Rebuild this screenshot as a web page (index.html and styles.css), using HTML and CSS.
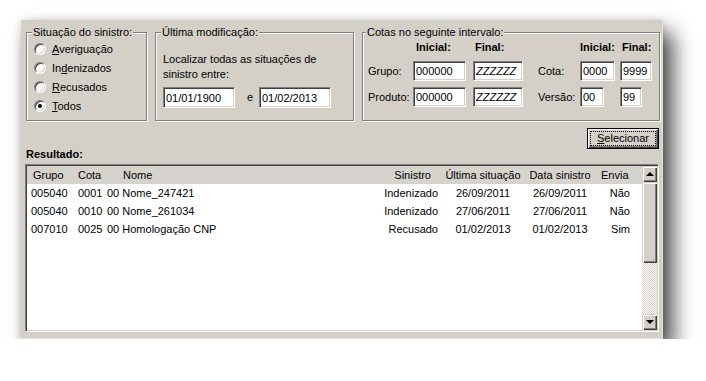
FILE: index.html
```html
<!DOCTYPE html>
<html lang="pt-BR">
<head>
  <meta charset="UTF-8">
  <title>Consulta de sinistros</title>
  <link rel="stylesheet" href="styles.css">
</head>
<body>
  <div class="janela">
    <div class="filtros">
      <fieldset class="grupo situacao">
        <legend>Situação do sinistro:</legend>
        <label class="opcao"><span class="bolinha"></span><span><u>A</u>veriguação</span></label>
        <label class="opcao"><span class="bolinha"></span><span>In<u>d</u>enizados</span></label>
        <label class="opcao"><span class="bolinha"></span><span><u>R</u>ecusados</span></label>
        <label class="opcao"><span class="bolinha marcada"></span><span><u>T</u>odos</span></label>
      </fieldset>

      <fieldset class="grupo modificacao">
        <legend>Última modificação:</legend>
        <p class="texto">Localizar todas as situações de<br>sinistro entre:</p>
        <div class="datas">
          <input class="campo data" type="text" value="01/01/1900">
          <span class="e">e</span>
          <input class="campo data" type="text" value="01/02/2013">
        </div>
      </fieldset>

      <fieldset class="grupo cotas">
        <legend>Cotas no seguinte intervalo:</legend>
        <div class="grade">
          <span></span>
          <b class="tit t1">Inicial:</b>
          <b class="tit t2">Final:</b>
          <span></span>
          <b class="tit t3">Inicial:</b>
          <b class="tit t4">Final:</b>

          <span class="rotulo">Grupo:</span>
          <input class="campo c6" type="text" value="000000">
          <input class="campo c6z zz" type="text" value="ZZZZZZ">
          <span class="rotulo">Cota:</span>
          <input class="campo c4" type="text" value="0000">
          <input class="campo c4f" type="text" value="9999">

          <span class="rotulo">Produto:</span>
          <input class="campo c6" type="text" value="000000">
          <input class="campo c6z zz" type="text" value="ZZZZZZ">
          <span class="rotulo">Versão:</span>
          <input class="campo c2" type="text" value="00">
          <input class="campo c2f" type="text" value="99">
        </div>
      </fieldset>
    </div>

    <div class="acoes">
      <button class="botao"><span class="foco"><u>S</u>elecionar</span></button>
    </div>

    <div class="resultado">Resultado:</div>

    <div class="lista">
      <div class="tabela">
        <div class="linha cabecalho">
          <span class="g">Grupo</span>
          <span class="c">Cota</span>
          <span class="n">Nome</span>
          <span class="s">Sinistro</span>
          <span class="u">Última situação</span>
          <span class="d">Data sinistro</span>
          <span class="v">Envia</span>
        </div>
        <div class="linha">
          <span class="g">005040</span>
          <span class="c">0001</span>
          <span class="n">00 Nome_247421</span>
          <span class="s">Indenizado</span>
          <span class="u">26/09/2011</span>
          <span class="d">26/09/2011</span>
          <span class="v">Não</span>
        </div>
        <div class="linha">
          <span class="g">005040</span>
          <span class="c">0010</span>
          <span class="n">00 Nome_261034</span>
          <span class="s">Indenizado</span>
          <span class="u">27/06/2011</span>
          <span class="d">27/06/2011</span>
          <span class="v">Não</span>
        </div>
        <div class="linha">
          <span class="g">007010</span>
          <span class="c">0025</span>
          <span class="n">00 Homologação CNP</span>
          <span class="s">Recusado</span>
          <span class="u">01/02/2013</span>
          <span class="d">01/02/2013</span>
          <span class="v">Sim</span>
        </div>
      </div>
      <div class="rolagem">
        <div class="seta"><span class="tri cima"></span></div>
        <div class="polegar"></div>
        <div class="trilho"></div>
        <div class="seta"><span class="tri baixo"></span></div>
      </div>
    </div>
  </div>
</body>
</html>
```

FILE: styles.css
```css
body {
  margin: 0;
  background: #fff;
  font-family: "Liberation Sans", Arial, sans-serif;
  font-size: 11px;
  color: #000;
}
.janela {
  width: 642px;
  height: 319px;
  box-sizing: border-box;
  margin: 20px 0 0 21px;
  padding: 6px 2px 6px 5px;
  background: #d4d0c8;
  border-right: 1px solid #e4e2dc;
  border-bottom: 1px solid #e4e2dc;
  box-shadow: 10px 13px 20px rgba(0, 0, 0, .7), 0 0 7px rgba(0, 0, 0, .15);
  display: flex;
  flex-direction: column;
}
.filtros {
  display: flex;
  gap: 8px;
}
.grupo {
  margin: 0;
  padding: 0 0 5px 7px;
  min-width: 0;
  box-sizing: border-box;
  border: 1px solid #808080;
  box-shadow: inset 1px 1px #fff, 1px 1px #fff;
}
.grupo legend {
  padding: 0 1px;
  margin-left: -2px;
  line-height: 13px;
  background: #d4d0c8;
}
.situacao { width: 121px; }
.modificacao { width: 199px; }
.cotas { flex: 1; padding-left: 5px; }

/* radios */
.opcao {
  display: flex;
  align-items: center;
  height: 19px;
}
.bolinha {
  width: 12px;
  height: 12px;
  box-sizing: border-box;
  border-radius: 50%;
  margin-right: 6px;
  background: #fff;
  border: 1px solid;
  border-color: #808080 #fff #fff #808080;
  box-shadow: inset 1px 1px #404040, inset -1px -1px #d4d0c8;
  position: relative;
}
.marcada::after {
  content: "";
  position: absolute;
  left: 3px;
  top: 3px;
  width: 4px;
  height: 4px;
  border-radius: 50%;
  background: #000;
}

/* campos */
.campo {
  font: inherit;
  color: #000;
  margin: 0;
  padding: 0 0 0 2px;
  box-sizing: border-box;
  height: 20px;
  background: #fff;
  border: 1px solid;
  border-color: #808080 #fff #fff #808080;
  box-shadow: inset 1px 1px #404040, inset -1px -1px #d4d0c8;
  outline: none;
}
.texto {
  margin: 13px 0 0;
  line-height: 15px;
}
.datas {
  display: flex;
  margin-top: 5px;
}
.data { width: 72px; height: 21px; }
.e {
  width: 24px;
  box-sizing: border-box;
  padding-left: 12px;
  line-height: 21px;
}

.grade {
  display: grid;
  grid-template-columns: 45px 60px 65px 42px 40px 32px;
  grid-template-rows: 14px 27px 26px;
  align-items: end;
  margin-top: 1px;
}
.tit { line-height: 13px; }
.t1 { padding-left: 3px; }
.t2 { padding-left: 2px; }
.t4 { padding-left: 2px; }
.rotulo { line-height: 20px; }
.c6 { width: 53px; }
.c6z { width: 50px; }
.c4 { width: 35px; }
.c4f { width: 32px; }
.c2 { width: 24px; }
.c2f { width: 22px; }
.zz { font-style: italic; }

/* botao */
.acoes {
  display: flex;
  justify-content: flex-end;
  margin: 7px 1px 0 0;
}
.botao {
  font: inherit;
  width: 72px;
  height: 21px;
  padding: 2px;
  background: #d4d0c8;
  border: 1px solid #000;
  box-shadow: inset 1px 1px #fff, inset -1px -1px #404040, inset -2px -2px #808080;
  display: flex;
}
.foco {
  flex: 1;
  border: 1px dotted #000;
  line-height: 13px;
}
.resultado {
  font-weight: bold;
  line-height: 11px;
}

/* lista */
.lista {
  display: flex;
  height: 169px;
  box-sizing: border-box;
  margin: 4px 1px 0 -1px;
  background: #fff;
  border: 1px solid;
  border-color: #808080 #fff #fff #808080;
  box-shadow: inset 1px 1px #404040, inset -1px -1px #d4d0c8;
  padding: 1px;
}
.tabela { flex: 1; }
.linha {
  display: grid;
  grid-template-columns: 47px 30px 256px 84px 78px 76px 44px;
  height: 18px;
  align-items: center;
}
.cabecalho { background: #d6d3cd; }
.linha .g { padding-left: 4px; }
.linha .c { padding-left: 4px; }
.linha .n { padding-left: 3px; }
.linha .s { text-align: right; padding-right: 6px; }
.linha .u, .linha .d { text-align: center; }
.linha .v { text-align: right; padding-right: 12px; }
.cabecalho .g { padding-left: 6px; }
.cabecalho .n { padding-left: 19px; }
.cabecalho .s { padding-right: 13px; }
.cabecalho .v { text-align: left; padding: 0 0 0 3px; }

.rolagem {
  width: 16px;
  display: flex;
  flex-direction: column;
  background: repeating-conic-gradient(#fff 0 25%, #d4d0c8 0 50%) 0 0 / 2px 2px;
}
.seta, .polegar {
  background: #d4d0c8;
  box-shadow: inset 1px 1px #d4d0c8, inset 2px 2px #fff, inset -1px -1px #404040, inset -2px -2px #808080;
}
.seta {
  height: 16px;
  display: flex;
  align-items: center;
  justify-content: center;
}
.polegar { height: 81px; }
.trilho { flex: 1; }
.tri {
  width: 0;
  height: 0;
  border-left: 4px solid transparent;
  border-right: 4px solid transparent;
}
.cima { border-bottom: 4px solid #000; margin-top: -1px; }
.baixo { border-top: 4px solid #000; }
```
